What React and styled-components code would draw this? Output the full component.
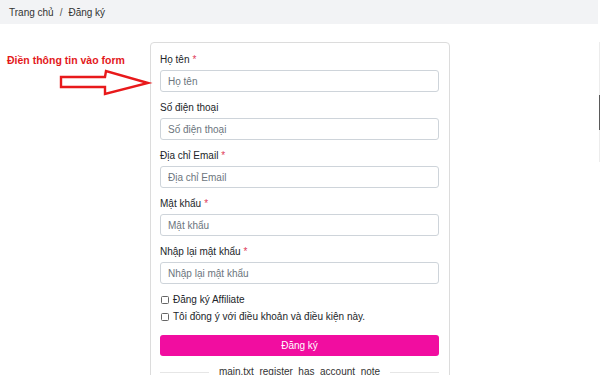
import React from "react";
import styled, { createGlobalStyle } from "styled-components";

const GlobalStyle = createGlobalStyle`
  html, body {
    margin: 0;
    padding: 0;
    background: #fff;
  }
  body {
    font-family: "Liberation Sans", Arial, sans-serif;
    font-size: 10px;
    color: #212529;
  }
  * {
    box-sizing: border-box;
  }
`;

const Page = styled.div`
  position: relative;
  width: 600px;
  height: 375px;
  overflow: hidden;
`;

const Breadcrumb = styled.nav`
  display: flex;
  align-items: center;
  gap: 6px;
  width: 598px;
  height: 24px;
  padding: 1px 0 0 9px;
  background-color: #f2f3f5;
  color: #333;
  font-size: 10px;
`;

const Crumb = styled.span`
  color: ${(p) => (p.$muted ? "#555" : "#333")};
`;

const Content = styled.main`
  display: flex;
  justify-content: center;
  padding-top: 18px;
`;

const Card = styled.form`
  width: 300px;
  border: 1px solid #dcdcdc;
  border-radius: 4px;
  padding: 11px 10px 0 9px;
`;

const Field = styled.div`
  display: flex;
  flex-direction: column;
  gap: 4px;
  margin-bottom: 10px;
`;

const Label = styled.label`
  line-height: 12px;
  font-size: 10px;
  color: #212529;
`;

const Required = styled.span`
  color: #e0405a;
  margin-left: 3px;
`;

const Input = styled.input`
  height: 22px;
  width: 100%;
  padding: 0 7px;
  border: 1px solid #ced4da;
  border-radius: 3px;
  font-family: inherit;
  font-size: 10px;
  color: #495057;
  outline: none;

  &::placeholder {
    color: #6c757d;
  }
`;

const Checks = styled.div`
  display: flex;
  flex-direction: column;
  gap: 5px;
  margin-top: 4px;
`;

const CheckRow = styled.label`
  display: flex;
  align-items: center;
  gap: 4px;
  line-height: 12px;
  font-size: 10px;
  color: #212529;
  padding-left: 1px;
`;

const Box = styled.input.attrs({ type: "checkbox" })`
  appearance: none;
  margin: 0;
  width: 8px;
  height: 8px;
  border: 1px solid #666;
  border-radius: 1.5px;
  background: #fff;
`;

const Submit = styled.button`
  display: block;
  width: 100%;
  height: 21px;
  margin-top: 12px;
  border: none;
  border-radius: 3px;
  background-color: #f10da0;
  color: #fff;
  font-family: inherit;
  font-size: 10px;
  cursor: pointer;
`;

const Divider = styled.div`
  display: flex;
  align-items: center;
  gap: 10px;
  margin-top: 10px;
  line-height: 12px;
  color: #333;
  font-size: 10px;

  &::before,
  &::after {
    content: "";
    flex: 1;
    height: 1px;
    background: #e6e6e6;
  }
`;

const Note = styled.div`
  position: absolute;
  left: 7px;
  top: 54px;
  width: 150px;
  height: 46px;
`;

const NoteText = styled.div`
  color: #e3191b;
  font-weight: bold;
  font-size: 10.5px;
  line-height: 13px;
  white-space: nowrap;
`;

const Arrow = styled.svg`
  position: absolute;
  left: 0;
  top: 0;
`;

const ScrollTrack = styled.div`
  position: absolute;
  right: 0;
  top: 42px;
  width: 1.5px;
  height: 120px;
  background: #ececec;
`;

const ScrollThumb = styled.div`
  margin-top: 53px;
  height: 35px;
  background: #5a5a5a;
`;

const fields = [
  { label: "Họ tên", required: true },
  { label: "Số điện thoại", required: false },
  { label: "Địa chỉ Email", required: true },
  { label: "Mật khẩu", required: true, type: "password" },
  { label: "Nhập lại mật khẩu", required: true, type: "password" },
];

export default function App() {
  return (
    <Page>
      <GlobalStyle />
      <Breadcrumb>
        <Crumb>Trang chủ</Crumb>
        <Crumb $muted>/</Crumb>
        <Crumb>Đăng ký</Crumb>
      </Breadcrumb>

      <Content>
        <Card onSubmit={(e) => e.preventDefault()}>
          {fields.map((f) => (
            <Field key={f.label}>
              <Label>
                {f.label}
                {f.required && <Required>*</Required>}
              </Label>
              <Input type="text" placeholder={f.label} />
            </Field>
          ))}
          <Checks>
            <CheckRow>
              <Box />
              Đăng ký Affiliate
            </CheckRow>
            <CheckRow>
              <Box />
              Tôi đồng ý với điều khoản và điều kiện này.
            </CheckRow>
          </Checks>
          <Submit type="submit">Đăng ký</Submit>
          <Divider>main.txt_register_has_account_note</Divider>
        </Card>
      </Content>

      <Note>
        <NoteText>Điền thông tin vào form</NoteText>
        <Arrow width="150" height="46" viewBox="0 0 150 46">
          <polygon
            points="54,23 98,23 99,17 141,29 98,40 98,33 54,33"
            fill="#fff"
            stroke="#e8191b"
            strokeWidth="2.4"
            strokeLinejoin="miter"
          />
        </Arrow>
      </Note>

      <ScrollTrack>
        <ScrollThumb />
      </ScrollTrack>
    </Page>
  );
}
